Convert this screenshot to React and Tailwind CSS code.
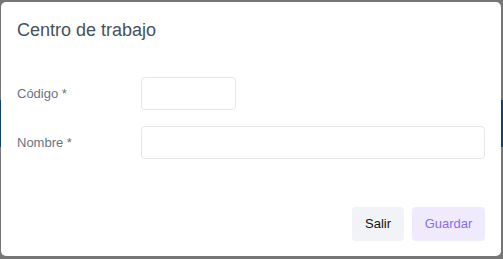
import React from "react";

const font = { fontFamily: '"Liberation Sans", Arial, sans-serif' };

const Field = ({ label, wide }) => (
  <div className="flex items-center">
    <label className="w-[124px] shrink-0 text-[13px] leading-4 text-[#687482]">{label}</label>
    <input
      type="text"
      className={`h-[33px] rounded border border-[#e6e7ea] bg-white outline-none ${wide ? "flex-1" : "w-[95px]"}`}
    />
  </div>
);

export default function App() {
  return (
    <div className="relative h-[259px] w-[503px] overflow-hidden bg-[#767676]" style={font}>
      {/* page content behind the backdrop */}
      <div className="mt-[100px] h-[47px] bg-[#0f4272]" />

      {/* Modal */}
      <div className="absolute left-[1px] top-[2px] flex h-[254px] w-[500px] flex-col rounded-[5px] bg-white px-4 pb-[15px] pt-4">
        <h2 className="text-[18px] leading-6 text-[#45525c]">Centro de trabajo</h2>

        <div className="mt-[35px] flex flex-col gap-4">
          <Field label="Código *" />
          <Field label="Nombre *" wide />
        </div>

        <div className="mt-auto flex justify-end gap-2">
          <button className="h-[34px] w-[52px] rounded bg-[#f2f3f7] text-[13px] text-[#111]">Salir</button>
          <button className="h-[34px] w-[73px] rounded bg-[#efebfd] text-[13px] text-[#8b6cf0]">Guardar</button>
        </div>
      </div>
    </div>
  );
}
